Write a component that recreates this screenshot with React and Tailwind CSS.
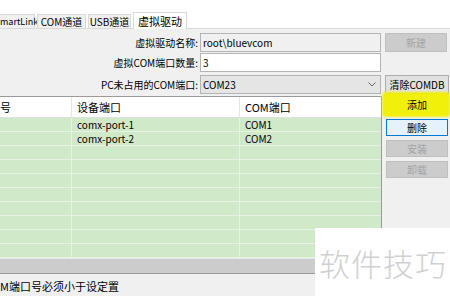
import React from "react";

const font = { fontFamily: '"Noto Sans CJK SC", "Noto Sans", sans-serif' };

const tabs = [
  { label: "COM通道", w: "w-[49px]" },
  { label: "USB通道", w: "w-[43px]" },
];

const rows = [
  { dev: "comx-port-1", com: "COM1" },
  { dev: "comx-port-2", com: "COM2" },
  {}, {}, {}, {}, {}, {}, {}, {},
];

const FormRow = ({ label, children, button, className = "" }) => (
  <div className={`flex items-center h-[19px] ${className}`}>
    <div className="w-[200px] pr-[2px] text-right whitespace-nowrap">{label}</div>
    {children}
    {button}
  </div>
);

const SideButton = ({ children, disabled, focused, className = "" }) => (
  <button
    className={`w-[62px] h-[17px] flex items-center justify-center border text-[10px] leading-none ${
      disabled
        ? "bg-[#cccccc] border-[#bfbfbf] text-[#a3a3a3]"
        : focused
        ? "bg-[#e5f1fb] border-[#0078d7] text-black"
        : "bg-[#e1e1e1] border-[#adadad] text-black"
    } ${className}`}
  >
    {children}
  </button>
);

export default function App() {
  return (
    <div
      className="relative w-[450px] h-[296px] overflow-hidden bg-[#f0f0f0] text-[10px] text-black leading-none"
      style={font}
    >
      {/* tab strip */}
      <div className="flex items-end gap-[2px] h-[29px] bg-white border-b border-[#d9d9d9]">
        <div className="w-[35px] h-[14px] flex items-center bg-[#f0f0f0] border border-l-0 border-b-0 border-[#d9d9d9] whitespace-nowrap text-[9px]">
          martLink
        </div>
        {tabs.map((t) => (
          <div
            key={t.label}
            className={`${t.w} h-[14px] flex items-center justify-center bg-[#f0f0f0] border border-b-0 border-[#d9d9d9] whitespace-nowrap`}
          >
            {t.label}
          </div>
        ))}
        <div className="w-[54px] h-[17px] -mb-px flex items-center justify-center bg-white border border-b-0 border-[#d9d9d9] text-[11px]">
          虚拟驱动
        </div>
      </div>

      {/* form */}
      <div className="pt-[4px]">
        <FormRow
          label="虚拟驱动名称:"
          button={
            <button className="ml-[4px] w-[62px] h-[19px] bg-[#cccccc] border border-[#bfbfbf] text-[#a3a3a3] flex items-center justify-center">
              新建
            </button>
          }
        >
          <div className="w-[181px] h-[19px] border border-[#b4b4b4] bg-[#f0f0f0] flex items-center pl-[2px]">
            root\bluevcom
          </div>
        </FormRow>
        <FormRow label="虚拟COM端口数量:" className="mt-[1px]">
          <div className="w-[181px] h-[19px] border border-[#b4b4b4] bg-white flex items-center pl-[2px]">
            3
          </div>
        </FormRow>
        <FormRow
          label="PC未占用的COM端口:"
          className="mt-[3px]"
          button={
            <button className="ml-[4px] w-[64px] h-[19px] bg-[#e1e1e1] border border-[#adadad] flex items-center justify-center whitespace-nowrap">
              清除COMDB
            </button>
          }
        >
          <div className="w-[181px] h-[19px] border border-[#b4b4b4] bg-[#e5e5e5] flex items-center justify-between pl-[2px] pr-[4px]">
            <span>COM23</span>
            <svg width="8" height="5" viewBox="0 0 8 5" fill="none" stroke="#666" strokeWidth="1">
              <path d="M0.5 0.5 L4 4 L7.5 0.5" />
            </svg>
          </div>
        </FormRow>
      </div>

      {/* table + side buttons */}
      <div className="flex mt-[2px]">
        <div className="w-[382px] border-t border-r border-b border-[#9a9a9a] flex flex-col">
          <div className="flex h-[21px] bg-white border-b border-[#e0e0e0]">
            <div className="w-[72px] flex items-center border-r border-[#e5e5e5] overflow-hidden">
              <span className="text-[11px] whitespace-nowrap">号</span>
            </div>
            <div className="w-[168px] flex items-center pl-[5px] border-r border-[#e5e5e5] text-[11px]">
              设备端口
            </div>
            <div className="flex-1 flex items-center pl-[5px] text-[11px]">COM端口</div>
          </div>
          {rows.map((r, i) => (
            <div key={i} className="flex h-[14px] bg-[#d0e9c9] border-b border-[#e6f3e2]">
              <div className="w-[72px] border-r border-[#e6f3e2]" />
              <div className="w-[168px] flex items-center pl-[5px] border-r border-[#e6f3e2]">
                {r.dev}
              </div>
              <div className="flex-1 flex items-center pl-[5px]">{r.com}</div>
            </div>
          ))}
          <div className="h-[15px] bg-[#cccccc] border-t border-[#e8e8e8]" />
        </div>

        <div className="ml-[4px] flex flex-col">
          <button className="relative w-[62px] h-[17px] flex items-center justify-center text-[10px]">
            <span className="absolute left-[-4px] top-[-4px] w-[68px] h-[25px] bg-[#f0f00a] rounded-[4px] blur-[1px]" />
            <span className="relative">添加</span>
          </button>
          <SideButton focused className="mt-[6px]">删除</SideButton>
          <SideButton disabled className="mt-[4px]">安装</SideButton>
          <SideButton disabled className="mt-[4px]">卸载</SideButton>
        </div>
      </div>

      {/* status */}
      <div className="pt-[7px] text-[11px] whitespace-nowrap">
        <span>M端口号必须小于设定置</span>
      </div>

      {/* watermark */}
      <div className="absolute left-[315px] top-[228px] w-[135px] h-[68px] bg-white flex items-center pl-[4px]">
        <span className="text-[31px] font-light text-[#d0d0d0] leading-none tracking-[1px]">软件技巧</span>
      </div>
    </div>
  );
}
